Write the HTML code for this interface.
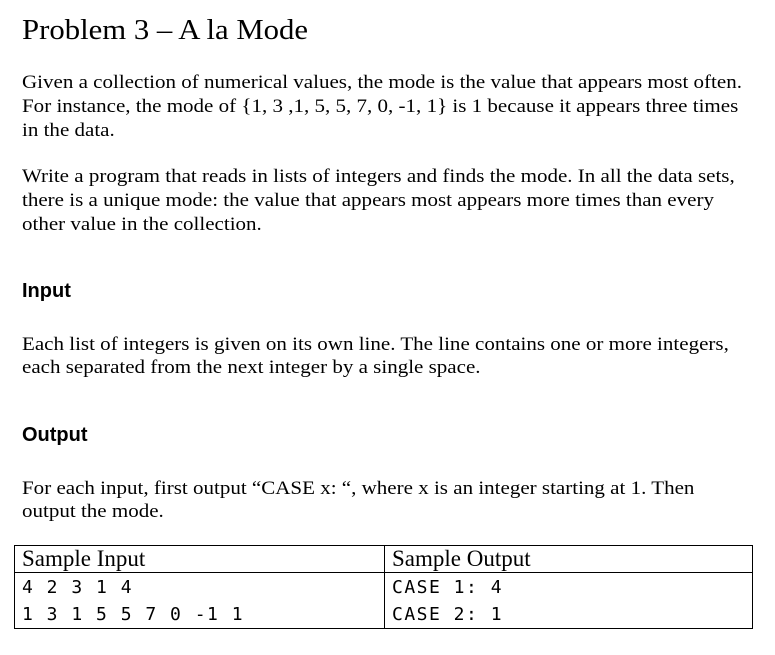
<!DOCTYPE html>
<html><head><meta charset="utf-8"><style>
body{margin:0;width:775px;height:655px;background:#fff;position:relative;overflow:hidden;color:#000}
.l{position:absolute;left:22px;white-space:nowrap;font-family:"Liberation Serif",serif;font-size:18.6px;line-height:24px;transform:scaleX(1.13);transform-origin:0 0}
.h{position:absolute;left:22px;font-family:"Liberation Sans",sans-serif;font-weight:bold;font-size:20px;line-height:24px}
table{position:absolute;left:14px;top:545px;width:739px;border-collapse:collapse}
td{border:1.5px solid #000;padding:0 0 0 7px;vertical-align:middle}
.th{font-family:"Liberation Serif",serif;font-size:23px;height:26px;line-height:26px}
.m{font-family:"DejaVu Sans Mono","Liberation Mono",monospace;font-size:18px;line-height:27px;letter-spacing:1.5px;border-top:none;border-bottom:none}
</style></head><body>
<div class="l" style="top:12px;font-size:29px;line-height:36px;transform:scaleX(1.06)">Problem 3 – A la Mode</div>
<div class="l" style="top:71px">Given a collection of numerical values, the mode is the value that appears most often.</div>
<div class="l" style="top:95px">For instance, the mode of {1, 3 ,1, 5, 5, 7, 0, -1, 1} is 1 because it appears three times</div>
<div class="l" style="top:119px">in the data.</div>
<div class="l" style="top:165px">Write a program that reads in lists of integers and finds the mode. In all the data sets,</div>
<div class="l" style="top:189px">there is a unique mode: the value that appears most appears more times than every</div>
<div class="l" style="top:213px">other value in the collection.</div>
<div class="h" style="top:279px">Input</div>
<div class="l" style="top:333px">Each list of integers is given on its own line. The line contains one or more integers,</div>
<div class="l" style="top:356px">each separated from the next integer by a single space.</div>
<div class="h" style="top:423px">Output</div>
<div class="l" style="top:477px">For each input, first output “CASE x: “, where x is an integer starting at 1. Then</div>
<div class="l" style="top:500px">output the mode.</div>
<table>
<tr><td class="th" style="width:362px">Sample Input</td><td class="th">Sample Output</td></tr>
<tr><td class="m" style="padding-top:1px">4 2 3 1 4<br>1 3 1 5 5 7 0 -1 1</td><td class="m" style="padding-top:1px">CASE 1: 4<br>CASE 2: 1</td></tr>
<tr><td style="height:0;border-top:none;padding:0"></td><td style="height:0;border-top:none;padding:0"></td></tr>
</table>
</body></html>
